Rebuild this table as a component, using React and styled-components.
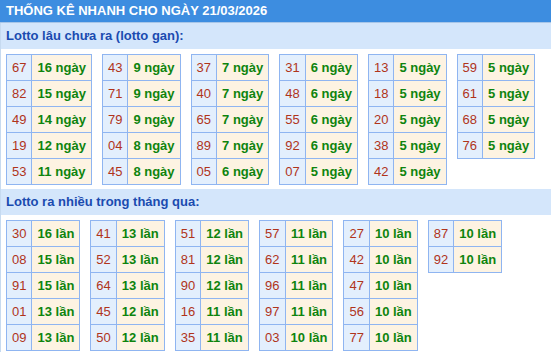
import React from 'react';
import styled, { createGlobalStyle } from 'styled-components';

const GlobalStyle = createGlobalStyle`
  body {
    margin: 0;
    background: #ffffff;
    font-family: "Liberation Sans", Arial, sans-serif;
  }
`;

const Wrapper = styled.div`
  width: 551px;
`;

const TopBar = styled.div`
  height: 22px;
  line-height: 22px;
  padding-left: 6px;
  background: #3d8de0;
  border-bottom: 1px solid #a8c6e8;
  color: #ffffff;
  font-size: 13px;
  font-weight: bold;
  white-space: nowrap;
`;

const Body = styled.div`
  border-left: 1px solid #c6daf0;
`;

const SectionTitle = styled.div`
  height: 26px;
  line-height: 26px;
  padding-left: 5px;
  background: #d4e6fb;
  color: #1a4bb0;
  font-size: 13px;
  font-weight: bold;
`;

const TableRow = styled.div`
  display: flex;
  align-items: flex-start;
  gap: 10px;
  padding: 5px 0 4px 5px;
`;

const Grid = styled.div`
  display: grid;
  grid-template-columns: auto auto;
  border-top: 1px solid #8fb5f1;
  border-left: 1px solid #8fb5f1;
`;

const Cell = styled.div`
  height: 25px;
  line-height: 25px;
  padding: 0 5px;
  text-align: center;
  font-size: 13px;
  white-space: nowrap;
  border-right: 1px solid #8fb5f1;
  border-bottom: 1px solid #8fb5f1;
`;

const NumCell = styled(Cell)`
  background: #e3effd;
  color: #b0341b;
`;

const ValCell = styled(Cell)`
  background: #fdf3e2;
  color: #0e840e;
  font-weight: bold;
`;

const gan = [
  [['67', 16], ['82', 15], ['49', 14], ['19', 12], ['53', 11]],
  [['43', 9], ['71', 9], ['79', 9], ['04', 8], ['45', 8]],
  [['37', 7], ['40', 7], ['65', 7], ['89', 7], ['05', 6]],
  [['31', 6], ['48', 6], ['55', 6], ['92', 6], ['07', 5]],
  [['13', 5], ['18', 5], ['20', 5], ['38', 5], ['42', 5]],
  [['59', 5], ['61', 5], ['68', 5], ['76', 5]],
];

const nhieu = [
  [['30', 16], ['08', 15], ['91', 15], ['01', 13], ['09', 13]],
  [['41', 13], ['52', 13], ['64', 13], ['45', 12], ['50', 12]],
  [['51', 12], ['81', 12], ['90', 12], ['16', 11], ['35', 11]],
  [['57', 11], ['62', 11], ['96', 11], ['97', 11], ['03', 10]],
  [['27', 10], ['42', 10], ['47', 10], ['56', 10], ['77', 10]],
  [['87', 10], ['92', 10]],
];

const StatTable = ({ rows, unit }) => (
  <Grid>
    {rows.map(([num, count]) => (
      <React.Fragment key={num}>
        <NumCell>{num}</NumCell>
        <ValCell>{count} {unit}</ValCell>
      </React.Fragment>
    ))}
  </Grid>
);

const Section = ({ title, tables, unit }) => (
  <>
    <SectionTitle>{title}</SectionTitle>
    <TableRow>
      {tables.map((rows, i) => (
        <StatTable key={i} rows={rows} unit={unit} />
      ))}
    </TableRow>
  </>
);

export default function App() {
  return (
    <Wrapper>
      <GlobalStyle />
      <TopBar>THỐNG KÊ NHANH CHO NGÀY 21/03/2026</TopBar>
      <Body>
        <Section title="Lotto lâu chưa ra (lotto gan):" tables={gan} unit="ngày" />
        <Section title="Lotto ra nhiều trong tháng qua:" tables={nhieu} unit="lần" />
      </Body>
    </Wrapper>
  );
}
